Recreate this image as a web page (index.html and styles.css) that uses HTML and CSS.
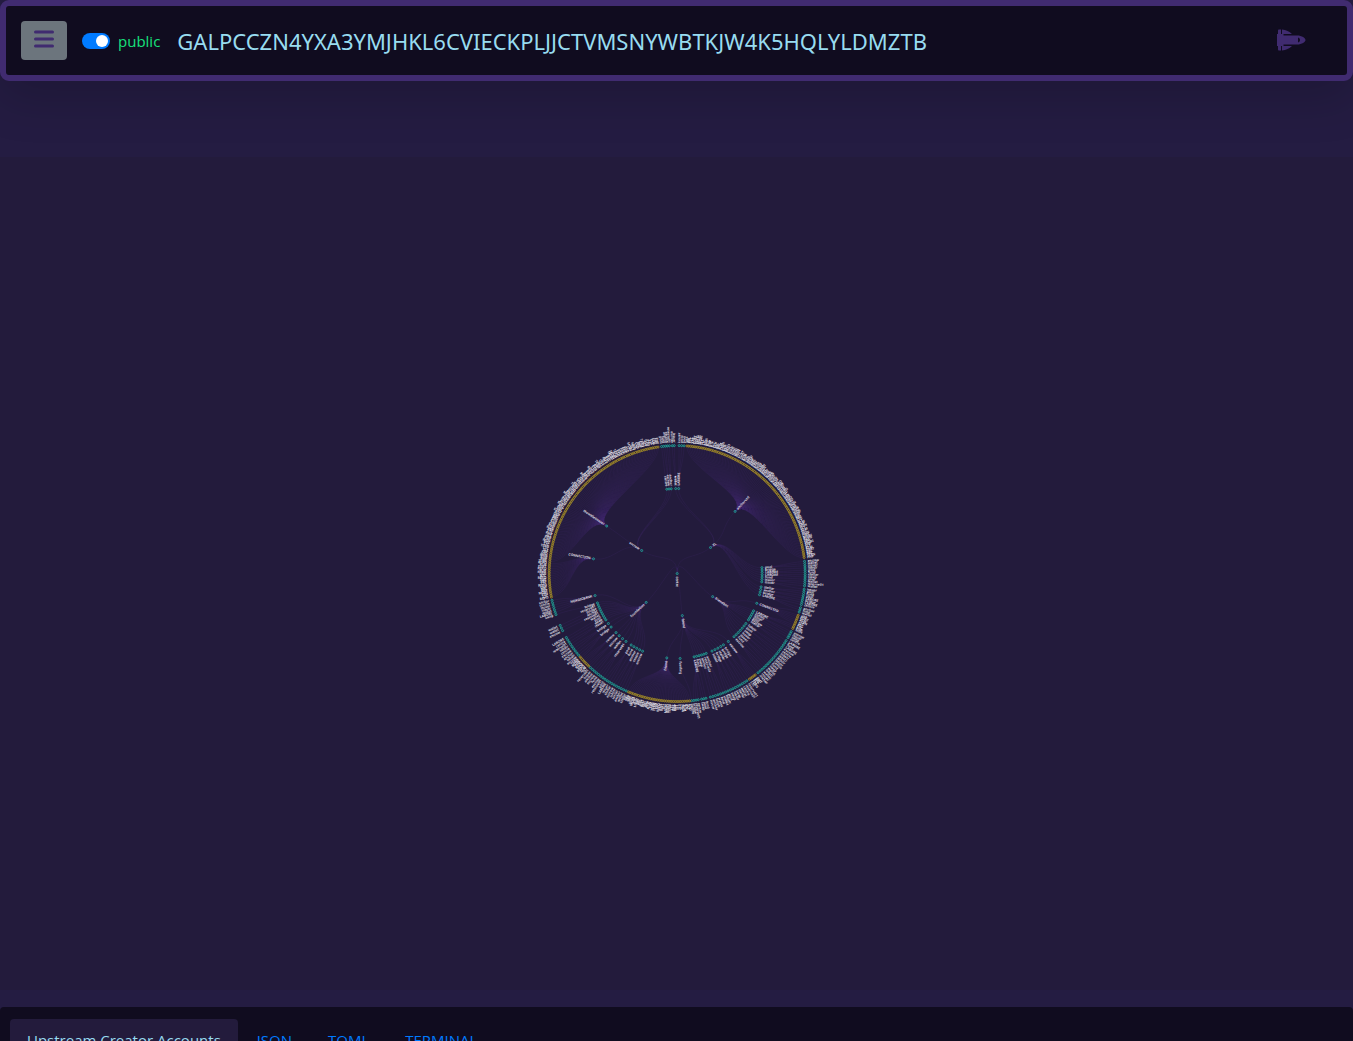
FILE: index.html
```html
<!DOCTYPE html>
<html lang="en">
<head>
<meta charset="utf-8">
<meta name="viewport" content="width=device-width, initial-scale=1">
<title>Upstream Creator Accounts</title>
<link rel="stylesheet" href="styles.css">
</head>
<body>
<header class="topbar">
  <button class="menu-button" type="button" aria-label="Menu">
    <svg class="menu-icon" viewBox="0 0 20 18" aria-hidden="true"><path d="M1.500 2h17M1.500 9h17M1.500 16h17"/></svg>
  </button>
  <label class="network"><input class="switch" type="checkbox" checked><span>public</span></label>
  <h1 class="account">GALPCCZN4YXA3YMJHKL6CVIECKPLJJCTVMSNYWBTKJW4K5HQLYLDMZTB</h1>
  <a class="home" href="#" aria-label="Home">
    <svg class="shuttle" viewBox="0 0 30 22" aria-hidden="true">
      <path d="M1 5h6.500v1.500H21c5 0 8.500 2.500 8.500 4.500s-3.500 4.500-8.500 4.500H7.500V17H1Z"/>
      <path d="M2 5V1.500C2 1 2.500.5 3 .5h2V5ZM6 .5c4 .5 7.500 2 10 4.500H6ZM2 17v3.500c0 .5.500 1 1 1h2V17ZM6 21.500c4-.5 7.500-2 10-4.500H6Z"/>
      <path class="shuttle-window" d="M22 8.500c1.500.5 2 1.500 2 2.500s-.5 2-2 2.500Z"/>
    </svg>
  </a>
</header>
<main>
  <section class="chart">
    <svg class="tree" id="tree" viewBox="-2032 -1250 4060 2500" role="img" aria-label="Account tree"></svg>
  </section>
  <section class="panel">
    <nav class="tabs">
      <a class="tab tab-active" href="#">Upstream Creator Accounts</a>
      <a class="tab" href="#">JSON</a>
      <a class="tab" href="#">TOML</a>
      <a class="tab" href="#">TERMINAL</a>
    </nav>
  </section>
</main>
<script src="tree.js"></script>
</body>
</html>
```
FILE: styles.css
```css
* { box-sizing: border-box; }

body {
  margin: 0;
  background: #241c42;
  color: #98dcf0;
  font: 15px/24px "Open Sans", "Noto Sans", sans-serif;
}

.topbar {
  position: relative;
  display: flex;
  align-items: center;
  padding: 15px;
  border: 6px solid #402b70;
  border-radius: 9px;
  background: #100c1f;
  box-shadow: 0 16px 48px rgba(0, 0, 0, 0.18);
}

.menu-button {
  display: grid;
  place-items: center;
  width: 46px;
  height: 39px;
  padding: 0 0 3px;
  border: 0;
  border-radius: 4px;
  background: #6c757d;
}

.menu-icon {
  width: 20px;
  height: 18px;
  fill: none;
  stroke: #402b70;
  stroke-width: 3;
  stroke-linecap: round;
}

.network {
  display: flex;
  align-items: center;
  gap: 8px;
  margin: 0 17px 0 15px;
  color: #17e07c;
}

.switch {
  appearance: none;
  display: flex;
  justify-content: flex-end;
  width: 28px;
  height: 16px;
  margin: 0;
  padding: 2px;
  border-radius: 8px;
  background: #007bff;
}

.switch::before {
  content: "";
  width: 12px;
  height: 12px;
  border-radius: 50%;
  background: #fff;
}

.account {
  margin: 0;
  font-family: "Noto Sans", "Open Sans", sans-serif;
  font-size: 22px;
  line-height: 32px;
  font-weight: 400;
}

.home {
  display: flex;
  margin: 0 26px 0 auto;
  padding-bottom: 2px;
}

.shuttle {
  width: 30px;
  height: 22px;
  fill: #402b70;
}

.shuttle-window { fill: #100c1f; }

.chart { padding: 76px 0 17px; }

.tree {
  display: block;
  width: 100%;
  background: #231b3c;
  font: 600 10px "Noto Sans", sans-serif;
}

.link {
  fill: none;
  stroke: #402b70;
  stroke-width: 3;
  stroke-opacity: 0.2;
}

.node { fill: none; stroke-width: 3; }
.node-account { stroke: #1f9a90; }
.node-asset { stroke: #9c8527; }

.label { fill: #f2eff6; }

.panel {
  padding: 12px 10px;
  border-radius: 4px;
  background: #100c1f;
}

.tabs {
  display: flex;
  gap: 2px;
}

.tab {
  padding: 9px 17px 7px;
  border-radius: 4px;
  color: #007bff;
  text-decoration: none;
}

.tab-active {
  background: #231b3c;
  color: #98dcf0;
}
```
FILE: tree.js
```js
const SVG = "http://www.w3.org/2000/svg";
const svg = document.getElementById("tree");
const RADII = [0, 127, 255, 384];

const codes = ["USD", "BTC", "ETH", "XLM", "EURT", "MOBI", "SLT", "RMT", "CNY", "REPO", "TERN", "XRP", "LTC", "PHP", "NGN", "BRL"];
const names = ["centre", "lobstr", "wallet", "anchor", "bridge", "reserve01", "pool", "fund", "issuer", "LABORE", "stellar", "escrow", "swap"];

// Branches: [angle, label]; leaf runs: [from, to, step, kind]
const branches = [
  [52, "XL"], [123, "friendbot"], [173, "friend"], [227, "foundation"], [303, "escrow"]
];
const middle = [
  [353, 356.5, 1.5, 4], [359, 359, 1, 0], [1, 1, 1, 0], [43, 43, 1, 0],
  [86, 96, 1.6, 0], [99, 106, 1.8, 0], [110.5, 110.5, 1, 1],
  [116, 124, 1.4, 1], [126, 139, 2, 1], [143, 143, 1, 2],
  [147, 157, 2.2, 2], [160, 170, 1.7, 2], [178, 178, 1, 2], [187, 187, 1, 2],
  [204, 213, 2.2, 3], [217, 226, 3, 3], [231, 235, 3, 3],
  [237, 251, 1.6, 3], [255, 255, 1, 3], [280, 280, 1, 4], [304, 304, 1, 4]
];
const outer = [
  [353, 354.8, 0.9, "account"], [355.6, 356.6, 0.9, "account"],
  [357.8, 359.2, 0.9, "account"], [0.9, 3.5, 1.1, "account"],
  [4.4, 83.5, 0.8, "asset"], [84.5, 95.8, 1, "account"],
  [97, 104, 1, "account"], [105.5, 108, 1, "account"],
  [109, 115.6, 0.8, "asset"], [117, 120, 1, "account"],
  [121.6, 141.5, 1.2, "account"], [142.4, 146, 0.8, "asset"],
  [147, 165, 1.2, "account"], [167, 169, 1, "account"], [170.5, 173.5, 1, "account"],
  [174.4, 202.5, 0.8, "asset"], [203.5, 222.8, 1.2, "account"],
  [223.7, 229.5, 0.8, "asset"], [230.4, 240.4, 1.2, "account"],
  [243.5, 246.5, 1.3, "account"], [251.3, 258.5, 1.1, "account"],
  [259.4, 352, 0.8, "asset"]
];

// Runs of leaves that share one middle node: [from, to, angle of the node]
const bundles = [[4, 84, 43], [174, 203, 187], [259, 275, 280], [275, 352.5, 304]];

let seed = 7;
function random() {
  seed = (seed * 16807) % 2147483647;
  return seed / 2147483647;
}

function point(angle, radius) {
  const a = (angle - 90) * Math.PI / 180;
  return (radius * Math.cos(a)).toFixed(1) + "," + (radius * Math.sin(a)).toFixed(1);
}

function add(name, attributes, text) {
  const element = document.createElementNS(SVG, name);
  for (const key in attributes) element.setAttribute(key, attributes[key]);
  if (text) element.textContent = text;
  svg.appendChild(element);
}

function link(a1, r1, a2, r2) {
  const mid = (r1 + r2) / 2;
  add("path", { class: "link", d: `M${point(a1, r1)}C${point(a1, mid)} ${point(a2, mid)} ${point(a2, r2)}` });
}

function node(angle, radius, kind, text) {
  const [x, y] = point(angle, radius).split(",");
  add("circle", { class: "node node-" + kind, cx: x, cy: y, r: 3 });
  const flip = angle > 180;
  add("text", {
    class: "label",
    transform: `rotate(${angle - 90}) translate(${radius + 9} 0)${flip ? " rotate(180)" : ""}`,
    dy: 3,
    "text-anchor": flip ? "end" : "start"
  }, text);
}

const inner = [];
for (const [from, to, step, parent] of middle) {
  for (let a = from; a <= to + 0.01; a += step) inner.push([a, parent]);
}
const leaves = [];
for (const [from, to, step, kind] of outer) {
  for (let a = from; a <= to + 0.01; a += step) leaves.push([a, kind]);
}

for (const [angle] of branches) link(0, 0, angle, RADII[1]);
for (const [angle, parent] of inner) link(branches[parent][0], RADII[1], angle, RADII[2]);
for (const [angle] of leaves) {
  const bundle = bundles.find(([from, to]) => angle >= from && angle < to);
  const source = bundle ? bundle[2] : inner.reduce((best, [a]) =>
    Math.abs(a - angle) < Math.abs(best - angle) ? a : best, 0);
  link(source, RADII[2], angle, RADII[3]);
}

node(180, 0, "account", "centre");
for (const [angle, text] of branches) node(angle, RADII[1], "account", text);
const fixed = { 43: "anchorusd", 110.5: "CONNECTED", 178: "funding", 187: "friend", 255: "NORDICBANK", 280: "CONNECTION", 304: "thewalletissuer" };
for (const [angle] of inner) {
  node(angle, RADII[2], "account", fixed[angle] || names[Math.floor(random() * names.length)]);
}
for (const [angle, kind] of leaves) {
  const list = kind === "asset" ? codes : names;
  node(angle, RADII[3], kind, list[Math.floor(random() * list.length)]);
}
```
